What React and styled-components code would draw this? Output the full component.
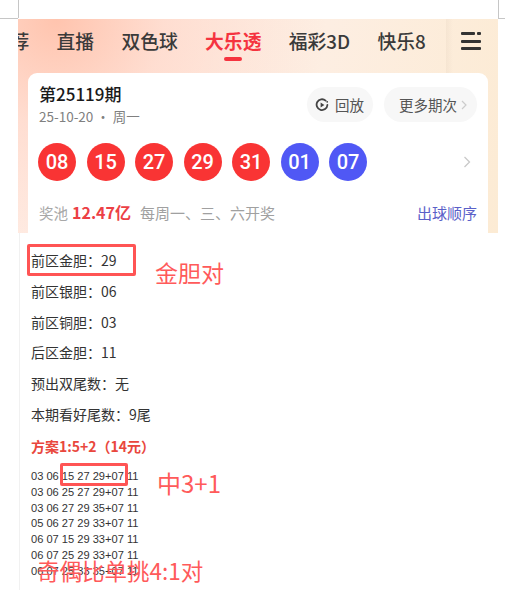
import React from 'react'
import styled, { createGlobalStyle } from 'styled-components'

const CJK = `"Noto Sans CJK SC", "Noto Sans", sans-serif`

const GlobalStyle = createGlobalStyle`
    html, body {
        margin: 0;
        padding: 0;
        background: #fff;
    }
`

const tabs = [
    { label: '荐', cut: true },
    { label: '直播' },
    { label: '双色球' },
    { label: '大乐透', active: true },
    { label: '福彩3D' },
    { label: '快乐8' },
]

const balls = [
    { n: '08' }, { n: '15' }, { n: '27' }, { n: '29' }, { n: '31' },
    { n: '01', blue: true }, { n: '07', blue: true },
]

const notes = ['前区金胆：29', '前区银胆：06', '前区铜胆：03', '后区金胆：11', '预出双尾数：无', '本期看好尾数：9尾']

const tickets = [
    '03 06 15 27 29+07 11',
    '03 06 25 27 29+07 11',
    '03 06 27 29 35+07 11',
    '05 06 27 29 33+07 11',
    '06 07 15 29 33+07 11',
    '06 07 25 29 33+07 11',
    '06 07 25 33 35+07 11',
]

export default function App() {
    return (
        <Page>
            <GlobalStyle />
            <Mark $left={0} $width={18} />
            <Mark $left={498} $width={7} />
            <Tick $left={18} />
            <Tick $left={498} />
            <Hero>
                <TabBar>
                    <TabScroll>
                        {tabs.map((t) => (
                            <Tab key={t.label} $active={t.active} $cut={t.cut}>{t.label}</Tab>
                        ))}
                    </TabScroll>
                    <MenuButton>
                        <svg width="22" height="20" viewBox="0 0 22 20">
                            <rect x="1" y="1" width="14" height="3" rx="1" fill="#333" />
                            <rect x="17" y="1" width="4" height="3" rx="1" fill="#333" />
                            <rect x="1" y="9" width="20" height="3" rx="1" fill="#333" />
                            <rect x="1" y="16" width="20" height="3" rx="1" fill="#333" />
                        </svg>
                    </MenuButton>
                </TabBar>
                <Card>
                    <CardHead>
                        <div>
                            <Issue>第25119期</Issue>
                            <DateLine>25-10-20 · 周一</DateLine>
                        </div>
                        <Actions>
                            <Pill>
                                <svg width="14" height="14" viewBox="0 0 14 14">
                                    <path d="M10.6 2.6A5.4 5.4 0 1 0 12.4 7" fill="none" stroke="#444" strokeWidth="1.8" strokeLinecap="round" />
                                    <path d="M5.6 4.6 9.4 7 5.6 9.4Z" fill="#444" />
                                    <circle cx="12.2" cy="3.8" r="0.9" fill="#444" />
                                </svg>
                                回放
                            </Pill>
                            <Pill $wide>
                                更多期次
                                <svg width="6" height="10" viewBox="0 0 6 10">
                                    <path d="M1 1l4 4-4 4" fill="none" stroke="#ccc" strokeWidth="1.2" />
                                </svg>
                            </Pill>
                        </Actions>
                    </CardHead>
                    <BallRow>
                        <Balls>
                            {balls.map((b, i) => (
                                <Ball key={i} $blue={b.blue}>{b.n}</Ball>
                            ))}
                        </Balls>
                        <svg width="8" height="12" viewBox="0 0 8 12">
                            <path d="M1.5 1l5 5-5 5" fill="none" stroke="#c9c9c9" strokeWidth="1.3" />
                        </svg>
                    </BallRow>
                    <PoolRow>
                        <PoolInfo>
                            奖池
                            <Amount>12.47亿</Amount>
                            <Schedule>每周一、三、六开奖</Schedule>
                        </PoolInfo>
                        <OrderLink>出球顺序</OrderLink>
                    </PoolRow>
                </Card>
            </Hero>
            <Article>
                {notes.map((n) => (
                    <Note key={n}>{n}</Note>
                ))}
                <PlanTitle>方案1:5+2（14元）</PlanTitle>
                <TicketList>
                    {tickets.map((t) => (
                        <Ticket key={t}>{t}</Ticket>
                    ))}
                </TicketList>
                <HitBox $left={7} $top={11} $width={109} $height={32} />
                <HitBox $left={40} $top={230} $width={68} $height={23} />
                <Scribble $left={135} $top={24} $size={23}>金胆对</Scribble>
                <Scribble $left={137} $top={235} $size={24}>中3+1</Scribble>
                <Scribble $left={17} $top={322} $size={22.5}>奇偶比单挑4:1对</Scribble>
            </Article>
        </Page>
    )
}

const Page = styled.div`
    position: relative;
    width: 505px;
    height: 609px;
    padding-top: 19px;
    box-sizing: border-box;
    background: #fff;
    overflow: hidden;
    font-family: ${CJK};
`

const Mark = styled.div`
    position: absolute;
    top: 18px;
    left: ${(p) => p.$left}px;
    width: ${(p) => p.$width}px;
    height: 1px;
    background: #c6c6c6;
`

const Tick = styled.div`
    position: absolute;
    top: 0;
    left: ${(p) => p.$left}px;
    width: 1px;
    height: 18px;
    background: #c6c6c6;
`

const Hero = styled.div`
    width: 480px;
    height: 214px;
    margin-left: 18px;
    background:
        radial-gradient(circle at 8% 0, #ffc4ae 0, rgba(255, 214, 200, 0.7) 22%, rgba(255, 235, 225, 0) 55%),
        linear-gradient(100deg, #fff0e9 0%, #fdeee2 60%, #fcebd4 100%);
`

const TabBar = styled.div`
    display: flex;
    align-items: stretch;
    height: 54px;
`

const TabScroll = styled.div`
    display: flex;
    flex: 1;
    gap: 27.3px;
    overflow: hidden;
    padding-top: 11px;
`

const Tab = styled.div`
    position: relative;
    flex-shrink: 0;
    font-size: 18.8px;
    line-height: 22px;
    height: 22px;
    font-weight: ${(p) => (p.$active ? 700 : 500)};
    color: ${(p) => (p.$active ? '#f5333f' : '#3a3a3a')};
    ${(p) => p.$cut && 'margin-left: -7.5px;'}

    &::after {
        content: '';
        display: ${(p) => (p.$active ? 'block' : 'none')};
        position: absolute;
        left: 19px;
        right: 19px;
        bottom: -9px;
        height: 4px;
        border-radius: 2px;
        background: #f5333f;
    }
`

const MenuButton = styled.div`
    width: 52px;
    flex-shrink: 0;
    padding-top: 12px;
    padding-left: 14px;
    box-sizing: border-box;
    background: linear-gradient(90deg, rgba(120, 90, 60, 0.05), rgba(120, 90, 60, 0) 7px);
`

const Card = styled.div`
    height: 160px;
    margin: 0 10px;
    padding: 10px 11px 0 10px;
    box-sizing: border-box;
    background: #fff;
    border-radius: 9px 9px 0 0;
`

const CardHead = styled.div`
    display: flex;
    justify-content: space-between;
    align-items: flex-start;
`

const Issue = styled.div`
    margin-left: 1px;
    font-size: 17px;
    line-height: 21px;
    font-weight: 500;
    color: #1a1a1a;
`

const DateLine = styled.div`
    margin-left: 1px;
    font-size: 13.5px;
    line-height: 25px;
    color: #808080;
`

const Actions = styled.div`
    display: flex;
    gap: 11px;
    margin-top: 4px;
`

const Pill = styled.div`
    display: flex;
    align-items: center;
    gap: ${(p) => (p.$wide ? '4px' : '6px')};
    height: 35px;
    padding: ${(p) => (p.$wide ? '0 10px 0 15px' : '0 9px 0 8px')};
    border-radius: 18px;
    background: #f7f7f7;
    font-size: 14.5px;
    color: #555;
`

const BallRow = styled.div`
    display: flex;
    justify-content: space-between;
    align-items: center;
    margin-top: 14px;
    padding-right: 6px;
`

const Balls = styled.div`
    display: flex;
    gap: 10.5px;
`

const Ball = styled.div`
    display: flex;
    align-items: center;
    justify-content: center;
    width: 38px;
    height: 38px;
    border-radius: 50%;
    background: ${(p) => (p.$blue ? '#5058f5' : '#f93434')};
    color: #fff;
    font-family: Roboto, sans-serif;
    font-size: 20px;
    font-weight: 500;
`

const PoolRow = styled.div`
    display: flex;
    justify-content: space-between;
    align-items: center;
    margin-top: 19px;
`

const PoolInfo = styled.div`
    display: flex;
    align-items: center;
    margin-left: 1px;
    font-size: 14.5px;
    color: #a8a8a8;
`

const Amount = styled.span`
    margin-left: 4px;
    font-size: 16px;
    font-weight: 700;
    color: #ec4045;
`

const Schedule = styled.span`
    margin-left: 9px;
    font-size: 15px;
    color: #a0a0a0;
`

const OrderLink = styled.span`
    font-size: 15px;
    color: #5a60c8;
`

const Article = styled.div`
    position: relative;
    width: 470px;
    height: 357px;
    margin-left: 19px;
    padding: 12px 0 0 11px;
    box-sizing: border-box;
    border-left: 1px solid #f1f1f1;
    background: #fff;
    color: #333;
`

const Note = styled.div`
    font-size: 14px;
    line-height: 30.8px;
`

const PlanTitle = styled.div`
    margin-top: 1.5px;
    font-size: 14px;
    line-height: 31px;
    font-weight: 700;
    color: #e9473d;
`

const TicketList = styled.div`
    margin-top: 7px;
`

const Ticket = styled.div`
    font-family: "Liberation Sans", ${CJK};
    font-size: 11.1px;
    line-height: 15.7px;
    white-space: nowrap;
`

const HitBox = styled.div`
    position: absolute;
    left: ${(p) => p.$left}px;
    top: ${(p) => p.$top}px;
    width: ${(p) => p.$width}px;
    height: ${(p) => p.$height}px;
    border: 3px solid #ff5454;
    border-radius: 2px;
    box-sizing: border-box;
`

const Scribble = styled.div`
    position: absolute;
    left: ${(p) => p.$left}px;
    top: ${(p) => p.$top}px;
    font-size: ${(p) => p.$size}px;
    line-height: 30px;
    color: #ff5a5a;
    white-space: nowrap;
`
